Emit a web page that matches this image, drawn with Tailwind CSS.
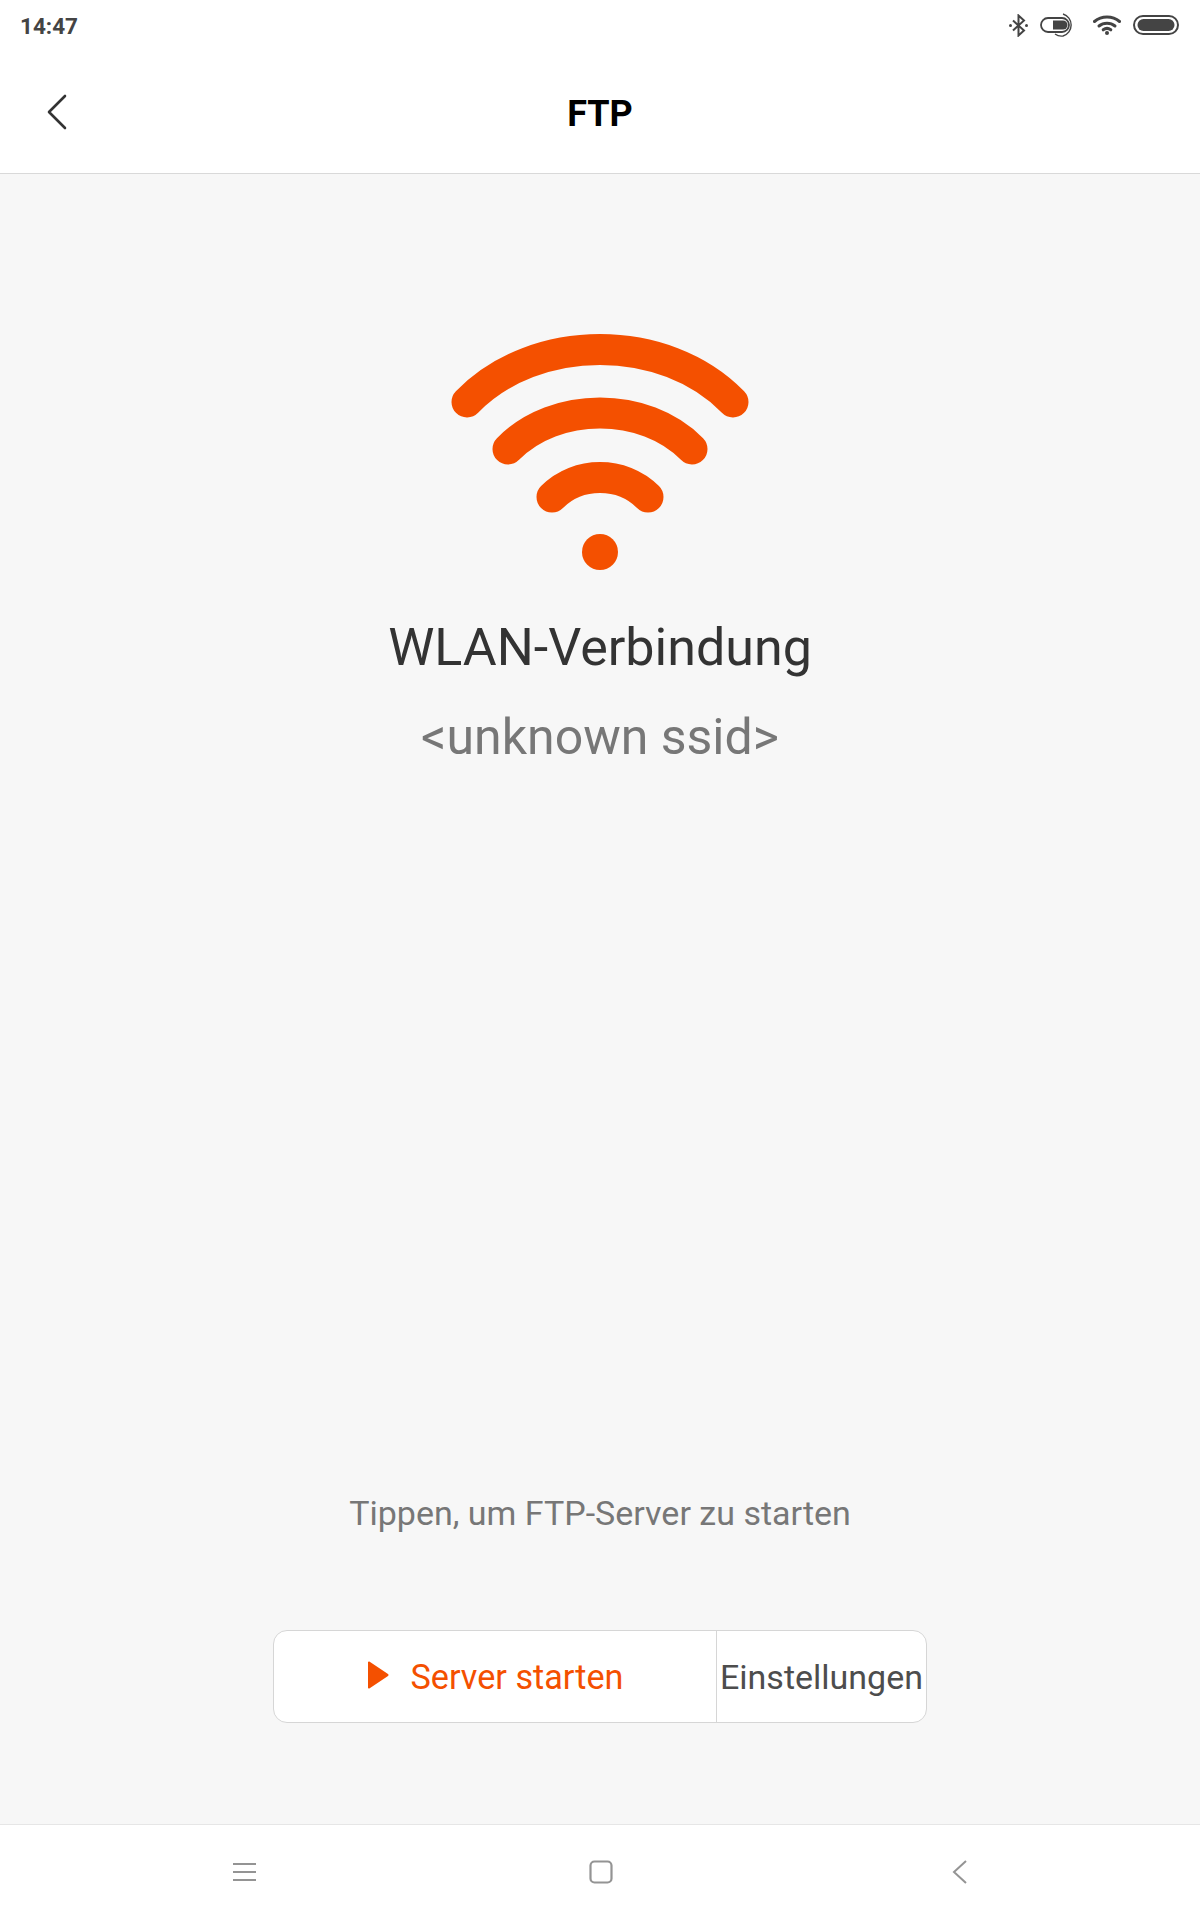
<!DOCTYPE html>
<html lang="de">
<head>
    <meta charset="UTF-8">
    <meta name="viewport" content="width=device-width, initial-scale=1.0">
    <title>FTP</title>
    <script src="https://cdn.jsdelivr.net/npm/@tailwindcss/browser@4"></script>
</head>
<body class="bg-[#f7f7f7] font-['Roboto',sans-serif]">
    <div class="flex flex-col h-[1920px] w-[1200px]">
        <!-- Statusleiste -->
        <div class="h-[50px] bg-white flex items-center justify-between pl-[20px] pr-[21px]">
            <span class="font-bold text-[22.500px] leading-none text-[#444444] mt-[2px]">14:47</span>
            <div class="flex items-center">
                <svg class="w-[19px] h-[23px] mr-[12px]" viewBox="0 0 19 23" fill="none" stroke="#444444" stroke-width="2">
                    <path d="M4 6.500l11 10-5.500 5V1.500l5.500 5-11 10"/>
                    <circle cx="1.500" cy="11.500" r="1.500" fill="#444444" stroke="none"/>
                    <circle cx="17.500" cy="11.500" r="1.500" fill="#444444" stroke="none"/>
                </svg>
                <svg class="w-[34px] h-[24px] mr-[19px]" viewBox="0 0 34 24" fill="none" stroke="#444444">
                    <rect x="1" y="5" width="28" height="14" rx="7" stroke-width="1.800"/>
                    <path d="M13 7.500h10a4.500 4.500 0 0 1 0 9H13z" fill="#444444" stroke="none"/>
                    <path d="M23 1a11.500 11.500 0 0 1 0 22 a11 11 0 0 1-8-2" stroke-width="1.400"/>
                </svg>
                <svg class="w-[28px] h-[20px] mr-[12px]" viewBox="0 0 28 20" fill="none" stroke="#444444" stroke-width="3" stroke-linecap="round">
                    <path d="M1.500 6.500c7-6 18-6 25 0"/>
                    <path d="M6 11c4.500-3.800 11.500-3.800 16 0"/>
                    <path d="M10.200 14.800c2.300-1.700 5.300-1.700 7.600 0"/>
                    <circle cx="14" cy="18" r="2" fill="#444444" stroke="none"/>
                </svg>
                <svg class="w-[46px] h-[20px]" viewBox="0 0 46 20" fill="none">
                    <rect x="1" y="1" width="44" height="18" rx="9" stroke="#444444" stroke-width="2"/>
                    <rect x="4.500" y="4" width="37" height="12" rx="6" fill="#444444"/>
                </svg>
            </div>
        </div>

        <!-- Titelleiste -->
        <div class="relative h-[124px] bg-white border-b border-[#d9d9d9] flex items-center justify-center">
            <svg class="absolute left-[47px] top-[44px] w-[20px] h-[36px]" viewBox="0 0 20 36" fill="none" stroke="#333333" stroke-width="2.600" stroke-linecap="round" stroke-linejoin="round">
                <path d="M18 2L2 18l16 16"/>
            </svg>
            <h1 class="text-[36px] font-bold leading-none text-black mt-[4px]">FTP</h1>
        </div>

        <!-- Inhalt -->
        <div class="flex-1 flex flex-col items-center">
            <svg class="mt-[160px] w-[300px] h-[240px]" viewBox="0 0 300 240" fill="none" stroke="#f45000" stroke-width="31" stroke-linecap="round">
                <path d="M17 68C85 -2 215 -2 283 68"/>
                <path d="M58 115C105 67 195 67 242 115"/>
                <path d="M102 163C128 137 172 137 198 163"/>
                <circle cx="150" cy="218" r="18" fill="#f45000" stroke="none"/>
            </svg>
            <p class="mt-[44px] text-[52px] leading-[60px] text-[#333333]">WLAN-Verbindung</p>
            <p class="mt-[31px] text-[50px] leading-[56px] text-[#777777]">&lt;unknown ssid&gt;</p>
            <p class="mt-auto text-[34px] leading-[40px] text-[#777777]">Tippen, um FTP-Server zu starten</p>
            <div class="mt-[97px] mb-[101px] flex h-[93px] w-[654px] bg-white border border-[#d6d6d6] rounded-[14px] overflow-hidden">
                <div class="w-[443px] flex items-center justify-center border-r border-[#d6d6d6]">
                    <svg class="w-[22px] h-[28px] mr-[22px] mb-[4px]" viewBox="0 0 22 28" fill="#f45000">
                        <path d="M1 1.500c0-1 1-1.300 1.700-.7L21 13c.7.500.7 1.500 0 2L2.700 27.200c-.7.500-1.700.2-1.700-.7z"/>
                    </svg>
                    <span class="text-[34.200px] leading-none text-[#f45000] mt-[2px]">Server starten</span>
                </div>
                <div class="flex-1 flex items-center justify-center text-[34px] leading-none text-[#4d4d4d]">Einstellungen</div>
            </div>
        </div>

        <!-- Navigationsleiste -->
        <div class="h-[96px] bg-white border-t border-[#e6e6e6] flex items-center pl-[233px] pb-[2px]">
            <svg class="w-[23px] h-[20px]" viewBox="0 0 23 20" fill="none" stroke="#949494" stroke-width="2.200">
                <path d="M0 2h23M0 10h23M0 18h23"/>
            </svg>
            <svg class="ml-[333px] w-[24px] h-[24px]" viewBox="0 0 24 24" fill="none" stroke="#949494" stroke-width="2.200">
                <rect x="1.500" y="1.500" width="21" height="21" rx="4"/>
            </svg>
            <svg class="ml-[339px] w-[16px] h-[24px]" viewBox="0 0 16 24" fill="none" stroke="#949494" stroke-width="2">
                <path d="M14 1L2 12l12 11"/>
            </svg>
        </div>
    </div>
</body>
</html>
